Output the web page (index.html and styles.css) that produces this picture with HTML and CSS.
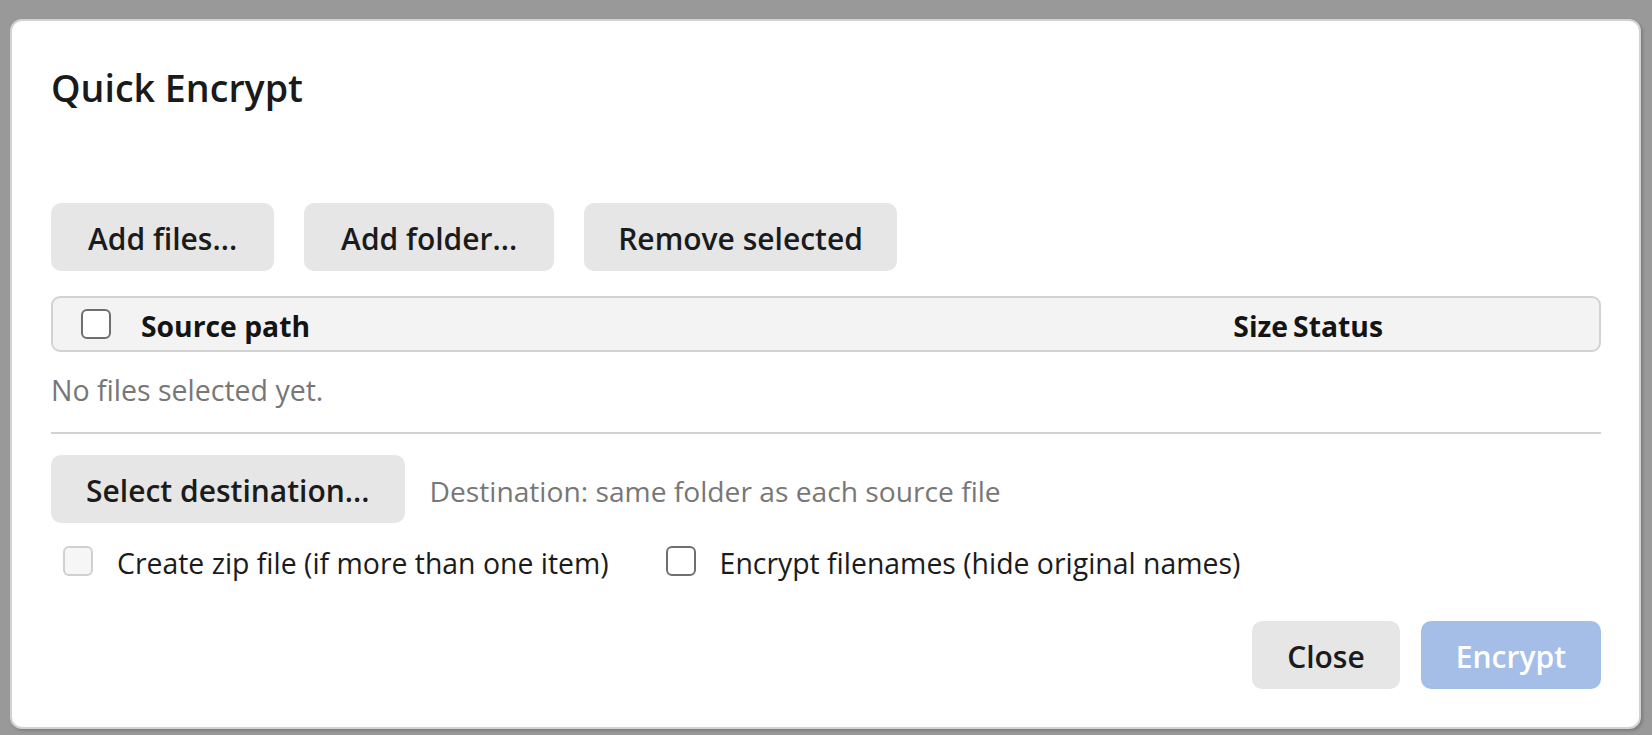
FILE: index.html
```html
<!DOCTYPE html>
<html lang="en">
<head>
<meta charset="utf-8">
<title>Quick Encrypt</title>
<link rel="stylesheet" href="styles.css">
</head>
<body>
<div class="dialog">
  <h1 class="title">Quick Encrypt</h1>

  <div class="toolbar">
    <button class="btn">Add files...</button>
    <button class="btn">Add folder...</button>
    <button class="btn">Remove selected</button>
  </div>

  <div class="table-head">
    <input type="checkbox" class="cb">
    <span class="col-source">Source path</span>
    <span class="col-size">Size</span>
    <span class="col-status">Status</span>
  </div>

  <p class="empty">No files selected yet.</p>

  <hr class="divider">

  <div class="dest-row">
    <button class="btn">Select destination...</button>
    <span class="dest-text">Destination: same folder as each source file</span>
  </div>

  <div class="options">
    <label class="opt opt-first"><input type="checkbox" class="cb cb-disabled" disabled><span>Create zip file (if more than one item)</span></label>
    <label class="opt"><input type="checkbox" class="cb"><span>Encrypt filenames (hide original names)</span></label>
  </div>

  <div class="footer">
    <button class="btn">Close</button>
    <button class="btn btn-primary" disabled>Encrypt</button>
  </div>
</div>
</body>
</html>
```

FILE: styles.css
```css
* { box-sizing: border-box; }

html, body {
  margin: 0;
  height: 100%;
}

body {
  background: #999999;
  padding: 19px 11px 0 10px;
  font-family: "Open Sans", "Noto Sans", "Liberation Sans", sans-serif;
  color: #1b1b1b;
}

.dialog {
  width: 1631px;
  height: 710px;
  background: #ffffff;
  border: 2px solid #d2d2d2;
  border-radius: 12px;
  box-shadow: 2px 2px 3px rgba(0, 0, 0, 0.18);
  padding: 45px 38px 0 39px;
  display: flex;
  flex-direction: column;
}

.title {
  margin: 0;
  font-size: 37.6px;
  line-height: 44px;
  font-weight: 600;
  color: #1a1a1a;
}

.toolbar {
  margin-top: 93px;
  display: flex;
  gap: 30px;
}

.toolbar .btn {
  padding-left: 37px;
  padding-right: 37px;
}

.toolbar .btn:last-child {
  padding-left: 34px;
  padding-right: 34px;
}

.btn {
  height: 68px;
  padding: 3px 35px 0 35px;
  border: none;
  border-radius: 10px;
  background: #e6e6e6;
  font-family: inherit;
  font-size: 30px;
  font-weight: 600;
  color: #1b1b1b;
  display: inline-flex;
  align-items: center;
  justify-content: center;
  white-space: nowrap;
}

.btn-primary {
  background: #a5bee8;
  color: #ffffff;
}

.table-head {
  margin-top: 25px;
  height: 56px;
  border: 2px solid #d2d2d2;
  border-radius: 9px;
  background: #f3f3f3;
  display: flex;
  align-items: center;
  padding: 0 216px 0 28px;
  font-size: 28.3px;
  font-weight: 700;
  color: #141414;
}

.col-source {
  margin-left: 30px;
  flex: 1;
  padding-top: 4px;
}

.col-size,
.col-status {
  padding-top: 4px;
}

.col-status {
  margin-left: 5px;
}

.cb {
  appearance: none;
  -webkit-appearance: none;
  margin: 0;
  width: 30px;
  height: 30px;
  border: 2.5px solid #6f6f6f;
  border-radius: 6px;
  background: #ffffff;
  flex: none;
}

.cb-disabled {
  border-color: #d0d0d0;
  background: #f6f6f6;
}

.empty {
  margin: 18px 0 0 0;
  font-size: 28.5px;
  line-height: 40px;
  color: #777777;
}

.divider {
  margin: 22px 0 0 0;
  border: none;
  height: 2px;
  background: #d2d2d2;
}

.dest-row {
  margin-top: 21px;
  display: flex;
  align-items: center;
  gap: 25px;
}

.dest-text {
  font-size: 28.2px;
  color: #777777;
  padding-top: 3px;
}

.options {
  margin-top: 23px;
  display: flex;
  align-items: center;
  gap: 57px;
}

.opt {
  display: flex;
  align-items: center;
  gap: 24px;
  font-size: 28.4px;
  color: #1b1b1b;
}

.opt span {
  line-height: 26px;
  padding-top: 4px;
}

.opt-first {
  margin-left: 12px;
}

.footer {
  margin-top: 45px;
  display: flex;
  justify-content: flex-end;
  gap: 21px;
}
```
